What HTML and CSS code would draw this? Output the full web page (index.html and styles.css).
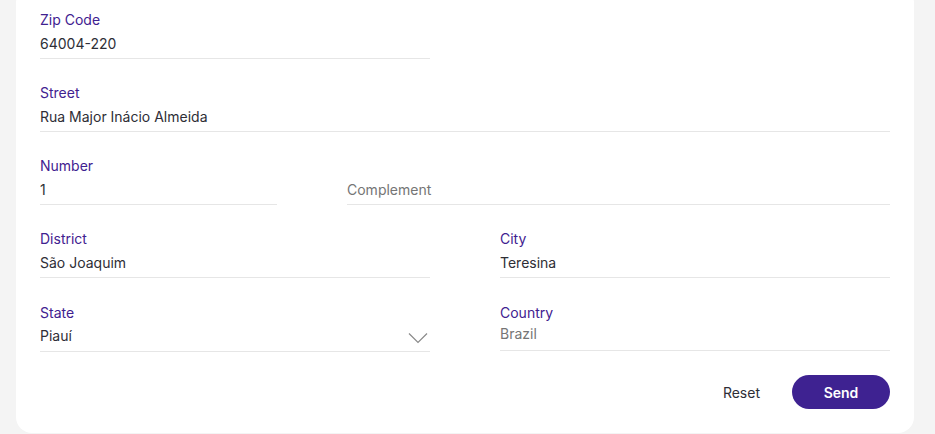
FILE: index.html
```html
<!DOCTYPE html>
<html lang="en">
<head>
<meta charset="utf-8">
<title>Address</title>
<link rel="stylesheet" href="styles.css">
</head>
<body>
<form class="card">
  <div class="row row-half">
    <div class="field">
      <label class="label">Zip Code</label>
      <div class="input">64004-220</div>
    </div>
  </div>
  <div class="row">
    <div class="field">
      <label class="label">Street</label>
      <div class="input">Rua Major Inácio Almeida</div>
    </div>
  </div>
  <div class="row row-number">
    <div class="field">
      <label class="label">Number</label>
      <div class="input">1</div>
    </div>
    <div class="field">
      <label class="label label-empty">&nbsp;</label>
      <div class="input placeholder">Complement</div>
    </div>
  </div>
  <div class="row row-two">
    <div class="field">
      <label class="label">District</label>
      <div class="input">São Joaquim</div>
    </div>
    <div class="field">
      <label class="label">City</label>
      <div class="input">Teresina</div>
    </div>
  </div>
  <div class="row row-two row-last">
    <div class="field">
      <label class="label">State</label>
      <div class="input select">
        <span>Piauí</span>
        <svg class="chevron" width="20" height="12" viewBox="0 0 20 12"><path d="M1 1.5 L10 10.5 L19 1.5" fill="none" stroke="#8a8a8a" stroke-width="1.2"/></svg>
      </div>
    </div>
    <div class="field">
      <label class="label">Country</label>
      <div class="input disabled">Brazil</div>
    </div>
  </div>
  <div class="actions">
    <button type="button" class="btn-reset">Reset</button>
    <button type="button" class="btn-send">Send</button>
  </div>
</form>
</body>
</html>
```

FILE: styles.css
```css
* { box-sizing: border-box; }
html, body { margin: 0; padding: 0; }
body {
  background: #f4f4f4;
  font-family: Inter, "Noto Sans", "Liberation Sans", sans-serif;
  height: 434px;
  overflow: hidden;
}
.card {
  margin: -13px 21px 0 16px;
  background: #ffffff;
  border-radius: 16px;
  padding: 24px 24px 24px 24px;
  display: flex;
  flex-direction: column;
  gap: 25px;
}
.row { display: grid; grid-template-columns: 1fr; }
.row-half { grid-template-columns: 390px 1fr; column-gap: 70px; }
.row-number { grid-template-columns: 237px 1fr; column-gap: 70px; }
.row-two { grid-template-columns: 1fr 1fr; column-gap: 70px; }
.row-last { margin-top: 1px; }
.field { display: flex; flex-direction: column; }
.label {
  font-size: 14px;
  line-height: 17px;
  color: #3f2190;
  height: 17px;
}
.input {
  height: 31px;
  font-size: 14px;
  line-height: 32px;
  color: #2e2e36;
  border-bottom: 1px solid #e6e6e6;
}
.placeholder { color: #757575; }
.disabled { color: #757575; line-height: 26px; height: 30px; }
.select { display: flex; align-items: center; justify-content: space-between; }
.chevron { margin-right: 2px; margin-top: 3px; }
.actions {
  display: flex;
  justify-content: flex-end;
  align-items: center;
  gap: 32px;
  margin-top: -2px;
}
.btn-reset {
  background: none;
  border: none;
  font-family: inherit;
  font-size: 14px;
  color: #2e2e36;
  padding: 0;
  cursor: pointer;
}
.btn-send {
  width: 98px;
  height: 34px;
  border: none;
  border-radius: 17px;
  background: #3e2291;
  color: #ffffff;
  font-family: inherit;
  font-size: 14px;
  font-weight: 600;
  cursor: pointer;
}
```
